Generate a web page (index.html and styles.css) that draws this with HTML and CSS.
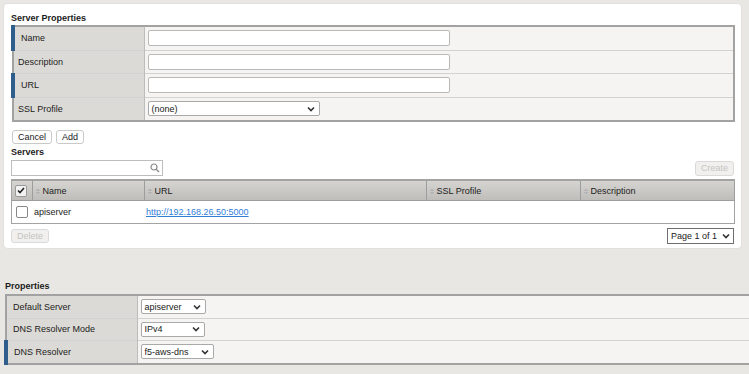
FILE: index.html
```html
<!DOCTYPE html>
<html lang="en">
<head>
    <meta charset="UTF-8">
    <title>Server Properties</title>
    <link rel="stylesheet" href="styles.css">
</head>
<body>
    <div class="tarjeta">
        <div class="titulo">Server Properties</div>
        <table class="propTabla">
            <tr>
                <td class="etiqueta requerido">Name</td>
                <td class="valor"><input type="text" class="campo"></td>
            </tr>
            <tr>
                <td class="etiqueta">Description</td>
                <td class="valor"><input type="text" class="campo"></td>
            </tr>
            <tr>
                <td class="etiqueta requerido">URL</td>
                <td class="valor"><input type="text" class="campo"></td>
            </tr>
            <tr>
                <td class="etiqueta">SSL Profile</td>
                <td class="valor">
                    <div class="lista anchoSsl"><span>(none)</span>
                        <svg width="8" height="6" viewBox="0 0 8 6"><path d="M1 1.5 L4 4.5 L7 1.5" fill="none" stroke="#333" stroke-width="1.6"/></svg>
                    </div>
                </td>
            </tr>
        </table>

        <div class="botones">
            <button class="btn">Cancel</button>
            <button class="btn">Add</button>
        </div>

        <div class="titulo">Servers</div>
        <div class="barraBuscar">
            <div class="buscar">
                <svg width="10" height="10" viewBox="0 0 10 10"><circle cx="4" cy="4" r="3" fill="none" stroke="#8a8a8a" stroke-width="1.2"/><path d="M6.2 6.2 L9 9" stroke="#8a8a8a" stroke-width="1.4"/></svg>
            </div>
            <button class="btn desactivado">Create</button>
        </div>

        <table class="servidores">
            <tr class="cabecera">
                <th class="colCheck">
                    <span class="check marcado">
                        <svg width="8" height="7" viewBox="0 0 8 7"><path d="M1 3.5 L3 5.5 L7 1" fill="none" stroke="#222" stroke-width="1.6"/></svg>
                    </span>
                </th>
                <th class="colNombre"><span class="orden"></span>Name</th>
                <th class="colUrl"><span class="orden"></span>URL</th>
                <th class="colSsl"><span class="orden"></span>SSL Profile</th>
                <th><span class="orden"></span>Description</th>
            </tr>
            <tr class="fila">
                <td class="colCheck"><span class="check"></span></td>
                <td>apiserver</td>
                <td><a href="#">http://192.168.26.50:5000</a></td>
                <td></td>
                <td></td>
            </tr>
        </table>

        <div class="pie">
            <button class="btn desactivado">Delete</button>
            <div class="pagina"><span>Page 1 of 1</span>
                <svg width="8" height="6" viewBox="0 0 8 6"><path d="M1 1.5 L4 4.5 L7 1.5" fill="none" stroke="#333" stroke-width="1.6"/></svg>
            </div>
        </div>
    </div>

    <div class="propiedades">
        <div class="titulo">Properties</div>
        <table class="propTabla abajo">
            <tr>
                <td class="etiqueta">Default Server</td>
                <td class="valor">
                    <div class="lista ancho1"><span>apiserver</span>
                        <svg width="8" height="6" viewBox="0 0 8 6"><path d="M1 1.5 L4 4.5 L7 1.5" fill="none" stroke="#333" stroke-width="1.6"/></svg>
                    </div>
                </td>
            </tr>
            <tr>
                <td class="etiqueta">DNS Resolver Mode</td>
                <td class="valor">
                    <div class="lista ancho2"><span>IPv4</span>
                        <svg width="8" height="6" viewBox="0 0 8 6"><path d="M1 1.5 L4 4.5 L7 1.5" fill="none" stroke="#333" stroke-width="1.6"/></svg>
                    </div>
                </td>
            </tr>
            <tr>
                <td class="etiqueta requerido">DNS Resolver</td>
                <td class="valor">
                    <div class="lista ancho3"><span>f5-aws-dns</span>
                        <svg width="8" height="6" viewBox="0 0 8 6"><path d="M1 1.5 L4 4.5 L7 1.5" fill="none" stroke="#333" stroke-width="1.6"/></svg>
                    </div>
                </td>
            </tr>
        </table>
    </div>
</body>
</html>
```
FILE: styles.css
```css
body {
    margin: 0;
    background-color: #e9e7e3;
    font-family: "Liberation Sans", Arial, sans-serif;
    font-size: 9px;
    color: #222;
}
.tarjeta {
    margin: 4px 0 0 4px;
    width: 737px;
    height: 244px;
    box-sizing: border-box;
    background-color: #fff;
    border-radius: 4px;
    padding: 8px 6px 0 7px;
    box-shadow: 0 0 0 1px #e2e0dc;
}
.titulo {
    font-weight: bold;
    height: 13px;
    line-height: 12px;
    color: #1c1c1c;
}
.propTabla {
    width: 724px;
    table-layout: fixed;
    border-collapse: collapse;
    border: 2px solid #a2a2a2;
}
.propTabla td {
    height: 22.5px;
    padding: 0;
    border-top: 1px solid #d2d2d2;
}
.etiqueta {
    width: 131px;
    box-sizing: border-box;
    background-color: #dcdad6;
    border-right: 1px solid #bcbcbc;
    padding-left: 4px !important;
}
.etiqueta.requerido {
    border-left: 4px solid #2f5e8c;
    padding-left: 6px !important;
}
.valor {
    background-color: #f5f4f2;
    padding-left: 3px !important;
}
.campo {
    display: block;
    width: 302px;
    height: 16px;
    box-sizing: border-box;
    border: 1px solid #b9b9b9;
    border-radius: 2px;
    margin: 0;
    padding: 0 3px;
    font-family: inherit;
    font-size: 9px;
}
.lista {
    display: flex;
    align-items: center;
    justify-content: space-between;
    height: 15px;
    box-sizing: border-box;
    border: 1px solid #a9a9a9;
    border-radius: 2px;
    background-color: #fff;
    padding: 0 4px 0 3px;
}
.anchoSsl { width: 172px; }
.ancho1 { width: 65px; }
.ancho2 { width: 64px; }
.ancho3 { width: 73px; }
.botones {
    display: flex;
    gap: 4px;
    margin: 8px 0 2px 1px;
}
.btn {
    height: 14px;
    padding: 0 5px;
    border: 1px solid #c9c9c9;
    border-radius: 3px;
    background-color: #fff;
    font-family: inherit;
    font-size: 9px;
    color: #222;
    line-height: 12px;
}
.btn.desactivado {
    background-color: #f1f0ee;
    color: #c4c4c4;
    border-color: #dadada;
}
.barraBuscar {
    display: flex;
    justify-content: space-between;
    align-items: center;
    margin-top: 1px;
    height: 16px;
}
.barraBuscar .btn {
    height: 15px;
    margin-right: 1px;
}
.buscar {
    width: 152px;
    height: 16px;
    box-sizing: border-box;
    border: 1px solid #bdbdbd;
    display: flex;
    justify-content: flex-end;
    align-items: center;
    padding-right: 2px;
}
.servidores {
    width: 724px;
    margin-top: 3px;
    border-collapse: collapse;
    border: 1px solid #a3a3a3;
}
.cabecera th {
    height: 19px;
    padding: 0 0 0 3px;
    text-align: left;
    font-weight: normal;
    background: linear-gradient(#d6d4d0, #bfbdb9);
    border-right: 1px solid #9d9d9d;
    border-bottom: 1px solid #9d9d9d;
    border-top: 2px solid #a3a3a3;
    color: #1c1c1c;
}
.colCheck { width: 16px; }
.colNombre { width: 108px; }
.colUrl { width: 278px; }
.colSsl { width: 150px; }
.orden {
    display: inline-block;
    width: 4px;
    height: 7px;
    margin-right: 3px;
    vertical-align: -1px;
    background:
        linear-gradient(to bottom right, transparent 50%, #b4b4b4 50%) 0 0 / 2px 3px no-repeat,
        linear-gradient(to bottom left, transparent 50%, #b4b4b4 50%) 2px 0 / 2px 3px no-repeat,
        linear-gradient(to top right, transparent 50%, #b4b4b4 50%) 0 4px / 2px 3px no-repeat,
        linear-gradient(to top left, transparent 50%, #b4b4b4 50%) 2px 4px / 2px 3px no-repeat;
}
.fila td {
    height: 22px;
    padding: 0 0 0 2px;
}
.fila td.colCheck {
    padding-left: 4px;
}
a {
    color: #2f7fd8;
}
.check {
    display: flex;
    align-items: center;
    justify-content: center;
    width: 10px;
    height: 10px;
    border: 1px solid #888;
    border-radius: 2px;
    background-color: #fff;
}
.check.marcado {
    background-color: #f2f2f2;
    border-color: #9a9a9a;
}
.pie {
    display: flex;
    justify-content: space-between;
    align-items: center;
    margin-top: 4px;
}
.pie .btn {
    height: 14px;
}
.pagina {
    display: flex;
    align-items: center;
    gap: 5px;
    height: 14px;
    border: 1px solid #6f6f6f;
    padding: 0 3px;
    background-color: #fff;
    margin-right: 1px;
}
.propiedades {
    margin-top: 32px;
    padding-left: 4px;
}
.propiedades .titulo {
    padding-left: 1px;
    height: 14px;
}
.propTabla.abajo {
    width: 748px;
}
.abajo td {
    height: 21.5px;
}
.abajo .etiqueta {
    width: 131px;
    padding-left: 6px !important;
}
.abajo .etiqueta.requerido {
    padding-left: 6px !important;
}
.abajo .valor {
    padding-left: 3px !important;
}
```
